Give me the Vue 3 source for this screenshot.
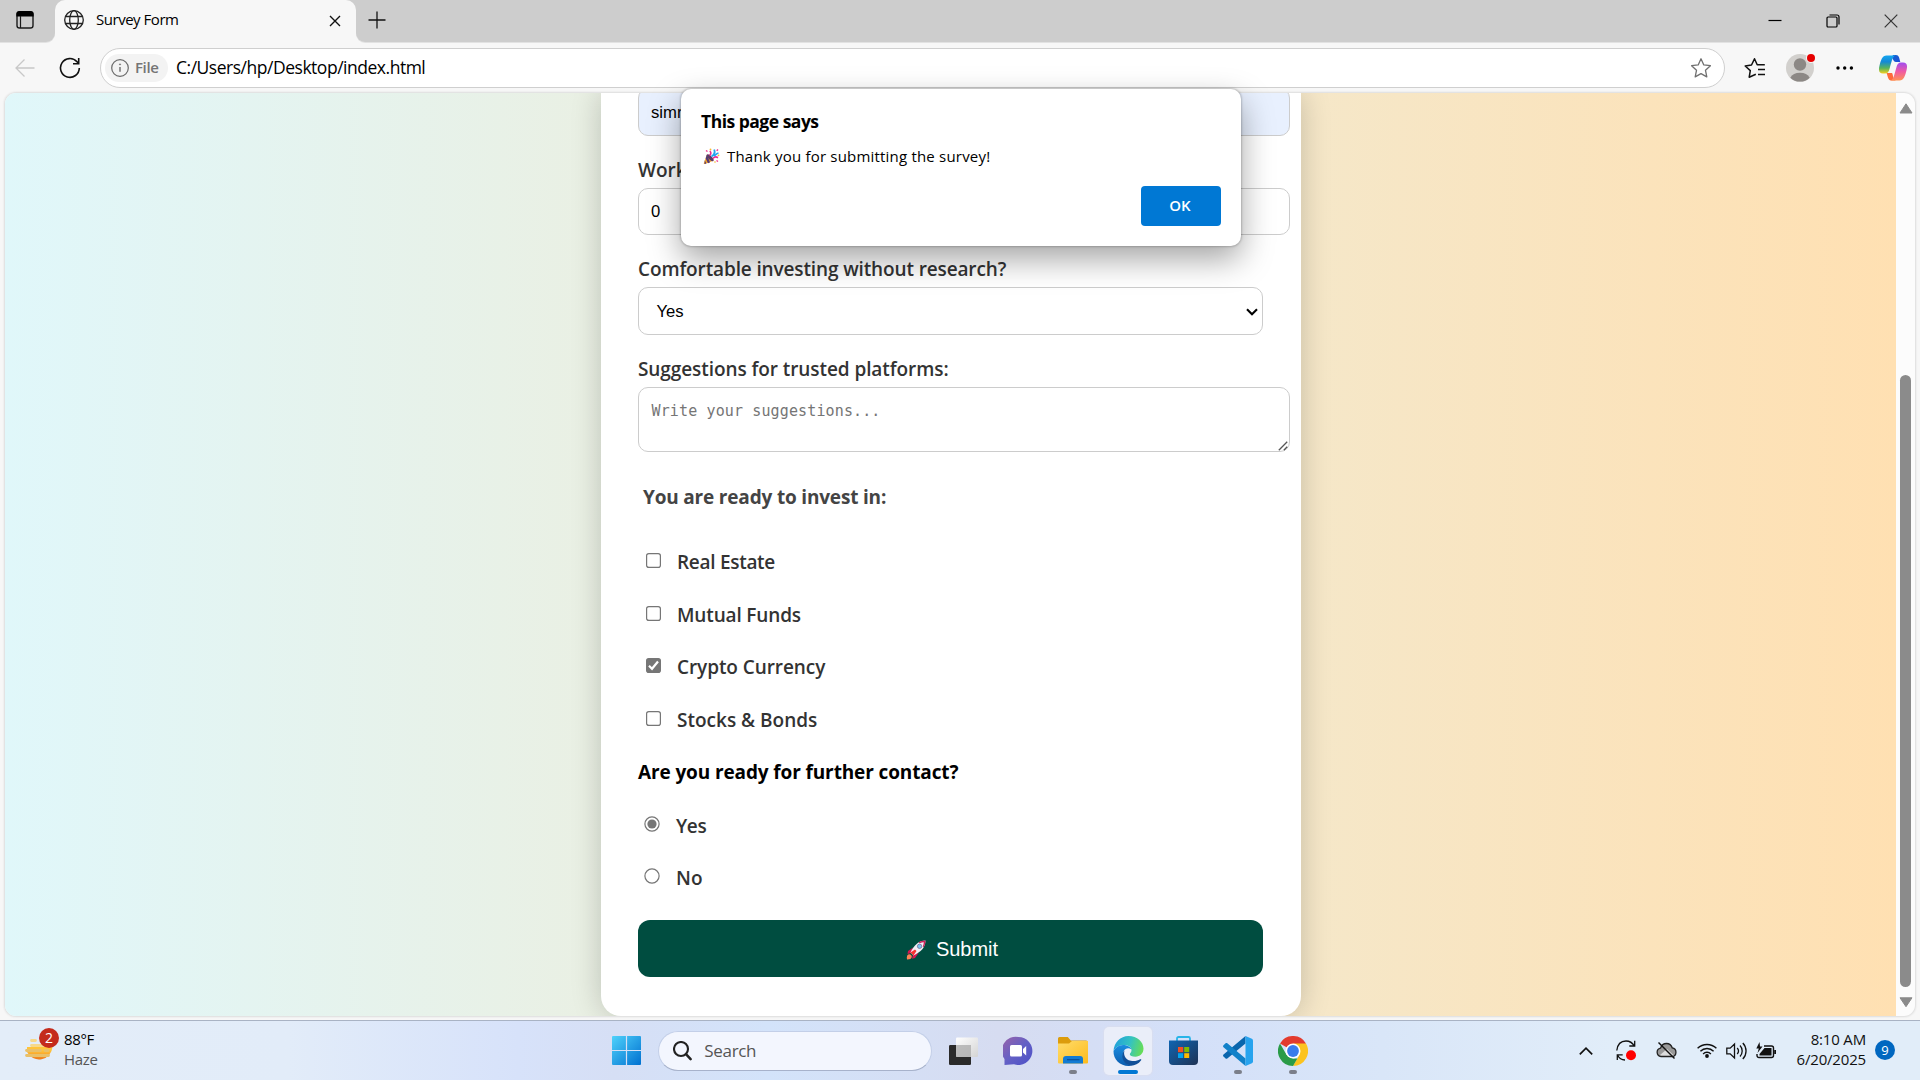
<script setup>
import { ref } from 'vue'

const investments = ref([
  { label: 'Real Estate', checked: false, spacing: -0.29 },
  { label: 'Mutual Funds', checked: false, spacing: -0.15 },
  { label: 'Crypto Currency', checked: true, spacing: -0.08 },
  { label: 'Stocks & Bonds', checked: false, spacing: 0 },
])
const contact = ref('Yes')
const contactOptions = ['Yes', 'No']
</script>

<template>
  <div class="screen">
    <header class="tabstrip">
      <div class="strip-left">
        <svg width="20" height="20" viewBox="0 0 20 20">
          <rect x="2" y="2" width="16" height="16" rx="2.6" fill="none" stroke="#1b1b1b" stroke-width="1.4" />
          <path d="M1.4 6.5V4a3 3 0 0 1 3-3h11.200a3 3 0 0 1 3 3v2.500z" fill="#000" />
          <path d="M5.500 6v12" stroke="#1b1b1b" stroke-width="1.2" />
        </svg>
      </div>
      <div class="tab-bg">
        <div class="tab">
          <svg class="globe" width="22" height="22" viewBox="0 0 22 22" fill="none" stroke="#222" stroke-width="1.300">
            <circle cx="11" cy="11" r="9.300" />
            <ellipse cx="11" cy="11" rx="4.300" ry="9.300" />
            <path d="M2.500 7.500h17M2.500 14.500h17" />
          </svg>
          <span class="tab-title">Survey Form</span>
          <svg class="tab-close" width="12" height="12" viewBox="0 0 12 12"><path d="M1 1l10 10M11 1L1 11" stroke="#111" stroke-width="1.400" /></svg>
        </div>
      </div>
      <div class="strip-right">
        <svg class="plus" width="18" height="18" viewBox="0 0 18 18"><path d="M9 .5v17M.5 9h17" stroke="#111" stroke-width="1.300" /></svg>
        <div class="win-controls">
          <svg width="14" height="14" viewBox="0 0 14 14"><path d="M.5 6.500h13" stroke="#000" stroke-width="1.200" /></svg>
          <svg width="14" height="14" viewBox="0 0 14 14" fill="none" stroke="#000" stroke-width="1.200">
            <rect x="1" y="3" width="10" height="10" rx="1" /><path d="M3.500 1H11a2 2 0 0 1 2 2v7.500" />
          </svg>
          <svg width="14" height="14" viewBox="0 0 14 14"><path d="M.7.7l12.600 12.600M13.300.7L.7 13.300" stroke="#333" stroke-width="1.200" /></svg>
        </div>
      </div>
    </header>

    <nav class="toolbar">
      <svg class="back" width="20" height="20" viewBox="0 0 20 20" fill="none" stroke="#c8c8c8" stroke-width="1.300"><path d="M19.500 10H1M9.500 1.500L1 10l8.500 8.500" /></svg>
      <svg class="reload" width="22" height="22" viewBox="0 0 22 22" fill="none" stroke="#111" stroke-width="1.600"><path d="M20.300 11A9.400 9.400 0 1 1 18 4.800L19.500 6.500M19.700 1v5.700H14" /></svg>
      <div class="address">
        <div class="file-chip">
          <svg width="18" height="18" viewBox="0 0 18 18" fill="none" stroke="#6a6a6a" stroke-width="1.200"><circle cx="9" cy="9" r="8.300" /><path d="M9 8v4.800" stroke-width="1.400" /><circle cx="9" cy="5.400" r=".6" fill="#6a6a6a" stroke-width=".6" /></svg>
          <span>File</span>
        </div>
        <span class="url">C:/Users/hp/Desktop/index.html</span>
        <svg width="22" height="22" viewBox="0 0 22 22" fill="none" stroke="#707070" stroke-width="1.300" stroke-linejoin="round"><path d="M11 1.800l2.800 6.100 6.600.8-4.900 4.600 1.300 6.600-5.800-3.300-5.800 3.300 1.300-6.600L1.600 8.700l6.600-.8z" /></svg>
      </div>
      <svg class="favs" width="22" height="22" viewBox="0 0 22 22" fill="none" stroke="#111" stroke-width="1.500" stroke-linejoin="round"><path d="M11.800 17.200L5.200 20.200l1.100-6.600L1.200 9l6.300-1L10.500 1.800 13.200 7.800h7.600M14 12.600h7M14 17.400h7" /></svg>
      <div class="avatar">
        <svg width="28" height="28" viewBox="0 0 28 28">
          <circle cx="14" cy="14" r="14" fill="#d2d0cd" /><circle cx="14" cy="10.500" r="6.200" fill="#8c8885" />
          <path d="M4.300 23.700a10.500 8 0 0 1 19.400 0A14 14 0 0 1 4.300 23.700z" fill="#8c8885" />
        </svg>
        <i class="dot"></i>
      </div>
      <svg class="more" width="18" height="4" viewBox="0 0 18 4"><circle cx="2" cy="2" r="1.700" /><circle cx="8.700" cy="2" r="1.700" /><circle cx="15.400" cy="2" r="1.700" /></svg>
      <svg class="copilot" width="28" height="26" viewBox="0 0 28 26">
        <defs>
          <linearGradient id="cpA" x1="0" y1="0" x2="0" y2="1"><stop offset="0" stop-color="#15a6f0" /><stop offset=".35" stop-color="#1489d6" /><stop offset=".7" stop-color="#59b45a" /><stop offset="1" stop-color="#f4cf20" /></linearGradient>
          <linearGradient id="cpB" x1=".3" y1="0" x2=".3" y2="1"><stop offset="0" stop-color="#a04df0" /><stop offset=".5" stop-color="#ef5aa4" /><stop offset="1" stop-color="#ff9354" /></linearGradient>
          <linearGradient id="cpC" x1="0" y1="0" x2="1" y2="1"><stop offset="0" stop-color="#1463cf" /><stop offset="1" stop-color="#1f4fd8" /></linearGradient>
        </defs>
        <path d="M14 0h3c3 0 3.300 3 4.300 7h-4.500c-2 0-2.800-3-4-5z" fill="url(#cpC)" />
        <path d="M7.500 18h5.500c1.500 2 .5 6.500 4 7.500h-5c-3 0-3-4-4.500-7.500z" fill="#ff6a3a" />
        <path d="M7.500.5h9c-3.200 1-3.800 6-6 13.500-.8 3-2 4.500-4.500 4.500H4c-4 0-4.500-3-3.700-7C1.800 5 3.300.5 7.500.5z" fill="url(#cpA)" />
        <path d="M20.500 25.500h-9c3.200-1 3.800-6 6-13.500.8-3 2-4.500 4.500-4.500h2c4 0 4.500 3 3.700 7-1.500 6.500-3 11-7.200 11z" fill="url(#cpB)" />
      </svg>
    </nav>

    <div class="page-frame">
      <main class="viewport">
        <form class="card" @submit.prevent>
          <input class="box first" value="simran" />
          <label class="label">Work</label>
          <input class="box" value="0" />
          <label class="label long">Comfortable investing without research?</label>
          <div class="box select">
            <span>Yes</span>
            <svg width="12" height="8" viewBox="0 0 12 8" fill="none" stroke="#000" stroke-width="2.100"><path d="M1 1.300l5 5 5-5" /></svg>
          </div>
          <label class="label suggest">Suggestions for trusted platforms:</label>
          <div class="box area">
            <span>Write your suggestions...</span>
            <svg class="grip" width="10" height="10" viewBox="0 0 10 10" stroke="#555" stroke-width="1.300"><path d="M.8 9.200L9.200.8M5.800 9.200L9.200 5.800" /></svg>
          </div>
          <h4 class="invest-title">You are ready to invest in:</h4>
          <div v-for="item in investments" :key="item.label" class="option" @click="item.checked = !item.checked">
            <svg class="check" width="15" height="15" viewBox="0 0 15 15">
              <rect x=".6" y=".6" width="13.800" height="13.800" rx="2.200" :fill="item.checked ? '#767676' : '#fff'" stroke="#767676" stroke-width="1.200" />
              <path v-if="item.checked" d="M3 7.800l3 3L12 3.500" fill="none" stroke="#fff" stroke-width="2.200" />
            </svg>
            <span :style="{ letterSpacing: item.spacing + 'px' }">{{ item.label }}</span>
          </div>
          <h4 class="contact-title">Are you ready for further contact?</h4>
          <div v-for="opt in contactOptions" :key="opt" class="option radio" @click="contact = opt">
            <svg class="check" width="16" height="16" viewBox="0 0 16 16">
              <circle cx="8" cy="8" r="7.100" fill="#fff" stroke="#767676" stroke-width="1.200" />
              <circle v-if="contact === opt" cx="8" cy="8" r="4.600" fill="#767676" />
            </svg>
            <span>{{ opt }}</span>
          </div>
          <button class="submit" type="submit">
            <svg width="20" height="20" viewBox="0 0 20 20">
              <path d="M1 19.500c-.6-3 .3-5 2-5.200 1.500-.2 3 1 2.800 2.700C5.500 18.800 3.500 19.600 1 19.500z" fill="#ff8354" />
              <path d="M7 7.500L2 11l-.5 3 4-1zM12.500 13L9 18l-3 .8 1-4.300z" fill="#d4154f" />
              <path d="M19.500.5C13 .5 8 5 4.500 12.500l3 3C15 12 19.500 7 19.500.5z" fill="#f3eef6" />
              <path d="M19.500.5c-2.600 0-4.800.7-6.800 1.900l4.900 4.900c1.200-2 1.900-4.200 1.900-6.800z" fill="#ca0b4a" opacity=".9" />
              <path d="M17.800 2.200c-3 .2-5 1.200-7 3L15 9.200c1.700-2 2.600-4.200 2.800-7z" fill="#f3eef6" />
              <path d="M4.500 12.500L9 9.500 10.500 11l-3 4.500z" fill="#f8312f" />
              <circle cx="13.600" cy="6.300" r="2.200" fill="#7ac3f2" stroke="#7b6f91" stroke-width=".8" />
            </svg>
            <span>Submit</span>
          </button>
        </form>
      </main>
      <aside class="scrollbar">
        <svg width="14" height="11" viewBox="0 0 14 11"><path d="M7 .8L13 10H1z" fill="#8b8b8b" stroke="#8b8b8b" stroke-linejoin="round" /></svg>
        <div class="thumb"></div>
        <svg width="14" height="11" viewBox="0 0 14 11"><path d="M7 9.700L13 .8H1z" fill="#8b8b8b" stroke="#8b8b8b" stroke-linejoin="round" /></svg>
      </aside>
    </div>

    <footer class="taskbar">
      <div class="weather">
        <div class="weather-icon">
          <svg width="30" height="26" viewBox="0 0 30 26" stroke-linecap="round">
            <defs><linearGradient id="sun" x1="0" y1="0" x2="0" y2="1"><stop offset="0.3" stop-color="#ffc43a" /><stop offset="1" stop-color="#ee7a17" /></linearGradient></defs>
            <path d="M3 10h25.500a13.500 13.500 0 0 1-25.500 5z" fill="url(#sun)" />
            <path d="M7.500 3.500h4M7.500 8.500h18" stroke="#f6d98b" stroke-width="2.800" />
            <path d="M2.500 13.500h14M21 13.500h3M2.500 18.500h22" stroke="#e9c069" stroke-width="2.800" />
          </svg>
          <b class="count">2</b>
        </div>
        <div class="weather-text"><span>88°F</span><span class="dim">Haze</span></div>
      </div>

      <div class="apps">
        <svg class="start" width="29" height="29" viewBox="0 0 29 29">
          <defs><linearGradient id="win" x1="0" y1="0" x2="1" y2="1"><stop offset="0" stop-color="#4fd2fb" /><stop offset="1" stop-color="#0070d0" /></linearGradient></defs>
          <path d="M1 0h12.900v13.900H0V1a1 1 0 0 1 1-1zM15.100 0H28a1 1 0 0 1 1 1v12.900H15.100zM0 15.100h13.900V29H1a1 1 0 0 1-1-1zM15.100 15.100H29V28a1 1 0 0 1-1 1H15.100z" fill="url(#win)" />
        </svg>
        <div class="search">
          <svg width="19" height="20" viewBox="0 0 19 20" fill="none" stroke="#222" stroke-width="2.100"><circle cx="8" cy="8" r="7" /><path d="M13 13.200l4.600 5" stroke-width="2.500" stroke-linecap="round" /></svg>
          <span>Search</span>
        </div>
        <div class="app">
          <svg width="30" height="30" viewBox="0 0 30 30">
            <defs><linearGradient id="tv" x1="0" y1="0" x2="1" y2="1"><stop offset="0" stop-color="#fff" /><stop offset="1" stop-color="#d4d4d4" /></linearGradient></defs>
            <rect x="1" y="9" width="22" height="20" rx="1.200" fill="#2a2a2a" /><rect x="8" y="1.500" width="22" height="19.500" rx="1.200" fill="url(#tv)" /><path d="M8 9h15v12H8z" fill="#aaa" opacity=".75" />
          </svg>
        </div>
        <div class="app">
          <svg width="30" height="30" viewBox="0 0 30 30">
            <defs><linearGradient id="chat" x1="0" y1="0" x2="1" y2="1"><stop offset="0" stop-color="#9a63a8" /><stop offset=".5" stop-color="#6460c5" /><stop offset="1" stop-color="#4c50c8" /></linearGradient></defs>
            <path d="M15.500 1a14 14 0 1 1-4.500 27.300L1.500 29V23A14 14 0 0 1 15.500 1z" fill="url(#chat)" />
            <rect x="7" y="9" width="12" height="11.500" rx="1.600" fill="#fff" /><path d="M20 13l3.200-3v9.500L20 16.500z" fill="#fff" />
          </svg>
        </div>
        <div class="app">
          <svg width="30" height="28" viewBox="0 0 30 28">
            <defs><linearGradient id="fold" x1="0" y1="0" x2="1" y2="1"><stop offset="0" stop-color="#ffdc6b" /><stop offset="1" stop-color="#fdbb1c" /></linearGradient></defs>
            <path d="M0 1.500A1.500 1.500 0 0 1 1.500 0h8.300l3 3.500H28a2 2 0 0 1 2 2V10H0z" fill="#dc9c0c" />
            <path d="M0 6.500h11l3-2.500h16v21.500a1 1 0 0 1-1 1H1a1 1 0 0 1-1-1z" fill="url(#fold)" />
            <path d="M5 26.500V22a3 3 0 0 1 3-3h14a3 3 0 0 1 3 3v4.500z" fill="#127bd3" /><path d="M9 22.700h12.500" stroke="#0a4f97" stroke-width="1.200" />
          </svg>
          <i class="run"></i>
        </div>
        <div class="app active">
          <svg width="31" height="30" viewBox="0 0 31 30">
            <defs>
              <linearGradient id="edA" x1="0" y1=".3" x2="1" y2=".5"><stop offset="0" stop-color="#1f9fdc" /><stop offset=".55" stop-color="#35c3c0" /><stop offset="1" stop-color="#66dd57" /></linearGradient>
              <linearGradient id="edB" x1="0" y1="0" x2="0" y2="1"><stop offset="0" stop-color="#1b8de0" /><stop offset="1" stop-color="#0b5cae" /></linearGradient>
            </defs>
            <path d="M.5 15C1 6.500 7.500 0 15.500 0c8.800 0 15 6 15 12.600 0 5-3.700 8.200-8 8.200-3.600 0-5.700-1.300-5.700-2.600 0-1 1.700-1.500 1.700-4 0-2.800-3-5.200-7.500-5.200C6 9 2.500 11.200.5 15z" fill="url(#edA)" />
            <path d="M.5 15C2.500 11 6 9 10 9c4 0 7.600 1.800 8.400 4.200-1-.6-2.200-1-3.200-1-4 0-5.700 4.500-5.200 8.300.6 4.800 4 8.300 8.500 9.200-1 .2-2 .3-3 .3C7.200 30 .2 23.500.5 15z" fill="url(#edB)" />
            <path d="M11.500 14.500c-1.300 3.700.3 9 6.300 10.300 3.700.8 7-.2 9.300-1.500.9-.5 1.500.3 1 1-2.600 3.700-6.400 5.300-10 5.500-5.500-.8-8.200-4.800-8.700-8.700-.3-2.500.5-5 2.100-6.600z" fill="#104f98" />
          </svg>
          <i class="run wide"></i>
        </div>
        <div class="app">
          <svg width="29" height="29" viewBox="0 0 29 29">
            <defs><linearGradient id="store" x1="0" y1="0" x2="1" y2="1"><stop offset="0" stop-color="#0f65b2" /><stop offset="1" stop-color="#1f3355" /></linearGradient></defs>
            <path d="M8 6V2.500A1.500 1.500 0 0 1 9.500 1h10A1.500 1.500 0 0 1 21 2.500V6" fill="none" stroke="#28b4e8" stroke-width="1.800" />
            <path d="M0 4.500h29V25a4 4 0 0 1-4 4H4a4 4 0 0 1-4-4z" fill="url(#store)" />
            <path d="M9 11h5.200v5.200H9z" fill="#f25022" /><path d="M15.200 11h5v5.200h-5z" fill="#7fba00" /><path d="M9 17.200h5.200V22H9z" fill="#00a4ef" /><path d="M15.200 17.200h5V22h-5z" fill="#ffb900" />
          </svg>
        </div>
        <div class="app">
          <svg width="30" height="30" viewBox="0 0 30 30">
            <path d="M22.500 7.500v0L4.300 22.500c-.6.400-1.200.4-1.700 0L.5 20.600c-.6-.5-.6-1.400 0-2L22.500 0z" fill="#0a66ad" />
            <path d="M22.500 22.500L4.300 7.200c-.6-.4-1.200-.4-1.700 0L.5 9.200c-.6.5-.6 1.400 0 2L22.500 30z" fill="#1181c9" />
            <path d="M22.500 0l6.400 2.700c.7.300 1.100.9 1.100 1.700v21.200c0 .8-.4 1.400-1.100 1.700L22.500 30z" fill="#27a3ee" />
          </svg>
          <i class="run"></i>
        </div>
        <div class="app">
          <svg width="30" height="30" viewBox="0 0 30 30">
            <path d="M15 15L2 7.500A15 15 0 0 1 28 7.500z" fill="#e33b2e" />
            <path d="M15 7.500h13A15 15 0 0 1 15 30l6.500-11.200z" fill="#fcc31e" />
            <path d="M2 7.500l6.500 11.200L15 22.500h4.400L15 30A15 15 0 0 1 2 7.500z" fill="#2a9b48" />
            <circle cx="15" cy="15" r="7.500" fill="#fff" /><circle cx="15" cy="15" r="5.900" fill="#3a7cec" />
          </svg>
          <i class="run"></i>
        </div>
      </div>

      <div class="tray">
        <svg width="14" height="8" viewBox="0 0 14 8" fill="none" stroke="#111" stroke-width="1.700"><path d="M.8 7.300L7 1.200l6.200 6.100" /></svg>
        <svg class="sync" width="21" height="21" viewBox="0 0 21 21" fill="none" stroke="#111" stroke-width="1.300"><path d="M.8 10.500C1.500 4.500 5 1 10 1c4 0 6.500 1.800 8.300 5M18.700.8V6h-5.400M1.300 20v-5.200h5.400M1.700 15.300C3 18 5.500 20 9 20" /><circle cx="15" cy="15.300" r="5" fill="#f00" stroke="none" /></svg>
        <svg class="cloud" width="21" height="17" viewBox="0 0 21 17"><path d="M5 14.500a4.200 4.200 0 0 1-.5-8.300C5.500 3 8 1.500 10.500 1.500c3 0 5 2 5.700 4.300a4.400 4.400 0 0 1 0 8.700z" fill="#999" stroke="#222" stroke-width="1.300" /><path d="M4 13l7-6 7 6.500H5z" fill="#ddd" /><path d="M2.500.5l16 16" stroke="#111" stroke-width="1.400" /></svg>
        <svg class="wifi" width="20" height="15" viewBox="0 0 20 15" fill="none" stroke="#111" stroke-width="1.400"><path d="M.6 5.300a13.500 13.500 0 0 1 18.800 0M3.400 8.200a9.400 9.400 0 0 1 13.200 0M6.100 10.900a5.600 5.600 0 0 1 7.800 0" /><circle cx="10" cy="13" r="1.900" fill="#111" stroke="none" /></svg>
        <svg class="vol" width="21" height="18" viewBox="0 0 21 18" fill="none" stroke="#111" stroke-width="1.300"><path d="M.8 6.200h3.400L8.500 2v14l-4.300-4.200H.8zM11.200 6a4.500 4.500 0 0 1 0 6M14 3.500a8 8 0 0 1 0 11M16.800 1a11.500 11.500 0 0 1 0 16" /></svg>
        <svg class="bat" width="21" height="17" viewBox="0 0 21 17"><path d="M8 4h7.500a2 2 0 0 1 2 2v7.500a2 2 0 0 1-2 2H3a2 2 0 0 1-2-2V12" fill="none" stroke="#111" stroke-width="1.400" /><path d="M8.500 6h7v7.500h-12V12z" fill="#111" /><path d="M18.200 8h1.800v4h-1.800z" fill="#111" /><path d="M3.500 0L.3 6.500h2.500L1.500 11l5-6.500H4z" fill="#111" /></svg>
        <div class="clock"><span>8:10 AM</span><span>6/20/2025</span></div>
        <b class="notif">9</b>
      </div>
    </footer>

    <div class="dialog" role="alertdialog">
      <h3>This page says</h3>
      <p>
        <svg width="17" height="17" viewBox="0 0 17 17">
          <path d="M4 6.500l6.300 6.300L1.800 16C1 16.300.6 15.900.9 15z" fill="#f5a52a" /><path d="M4 6.500l3 8-2 .700-2.400-5zM1.700 12.300l1.700 3.200-1.800.5z" fill="#533a78" />
          <ellipse cx="7.200" cy="9.700" rx="4.500" ry="1.800" transform="rotate(45 7.200 9.700)" fill="#5b3c65" />
          <path d="M6.500 7.500C8.500 6 8 4 6.800 3M10 10.500c1.500-2 3.500-1.700 5-.8" fill="none" stroke="#ed2a93" stroke-width="1.600" />
          <path d="M8.500 8.500C11 7 12.500 5 11.200 1.500M11 8c1.500-1 2.500-2.500 4.500-3" fill="none" stroke="#22a7ee" stroke-width="1.800" />
          <path d="M3 2.500l1.500 1M15 1.500l-1.300 1.300M13.500 12.500l1.500 1" stroke="#f0308c" stroke-width="1.400" /><circle cx="7.500" cy="1.500" r=".9" fill="#f9b62d" /><circle cx="15.500" cy="7.300" r=".9" fill="#f9b62d" /><circle cx="12" cy="14" r=".8" fill="#f9b62d" />
        </svg>
        <span>Thank you for submitting the survey!</span>
      </p>
      <button>OK</button>
    </div>
  </div>
</template>

<style>
body { overflow: hidden; }
</style>

<style scoped>
* { box-sizing: border-box; }
svg { display: block; flex: none; }
.screen { position: relative; display: flex; flex-direction: column; width: 1920px; height: 1080px; background: #f7f7f7; font-family: "Open Sans", "Noto Sans", sans-serif; color: #000; overflow: hidden; }

.tabstrip { display: flex; height: 42px; flex: none; }
.strip-left { width: 55px; background: #cdcdcd; border-bottom-right-radius: 9px; padding: 10px 0 0 15px; box-shadow: 0 1px #e2e2e2; }
.tab-bg { width: 301px; background: linear-gradient(#cdcdcd 20px, #f7f7f7 20px); }
.tab { display: flex; align-items: center; height: 42px; border-radius: 10px 10px 0 0; background: #f7f7f7; padding: 0 15px 2px 8px; }
.globe { margin-right: 11px; }
.tab-title { flex: 1; font-size: 15px; letter-spacing: -0.47px; line-height: 20px; padding-bottom: 2px; }
.tab-close { margin-top: 1px; }
.strip-right { flex: 1; display: flex; justify-content: space-between; background: #cdcdcd; border-bottom-left-radius: 9px; padding: 0 22px 0 12px; box-shadow: 0 1px #e2e2e2; }
.plus { margin-top: 11px; }
.win-controls { display: flex; gap: 44px; padding-top: 14px; }

.toolbar { display: flex; align-items: center; height: 51px; flex: none; padding: 0 12px 0 15px; }
.back { margin-right: 24px; }
.reload { margin-right: 19px; }
.address { flex: 1; display: flex; align-items: center; height: 40px; border: 1px solid #cfcfcf; border-radius: 20px; background: #fff; padding: 0 12px 0 4px; }
.file-chip { display: flex; align-items: center; width: 63px; height: 28px; border-radius: 14px; background: #f3f3f3; padding-left: 6px; gap: 6px; font-size: 15px; font-weight: 600; letter-spacing: -0.38px; color: #757575; }
.file-chip span { padding-bottom: 1px; }
.url { flex: 1; margin-left: 8px; padding-bottom: 2px; font-size: 17.5px; letter-spacing: -0.48px; }
.favs { margin-left: 19px; }
.avatar { position: relative; margin-left: 20px; }
.dot { position: absolute; right: -1px; top: 0; width: 8px; height: 8px; border-radius: 50%; background: #e60000; box-shadow: 0 0 0 1px #f7f7f7; }
.more { margin: 0 25px 0 22px; }
.copilot { margin-right: 1px; }

.page-frame { display: flex; height: 923px; flex: none; margin: 0 5px; border-radius: 11px; overflow: hidden; background: #fcfcfc; box-shadow: 0 0 2px 1px #dcdcdc; }
.viewport { width: 1891px; height: 923px; background: linear-gradient(to right, #e0f7fa, #ffe0b2); overflow: hidden; }
.card { display: flex; flex-direction: column; width: 700px; height: 923px; margin-left: 596px; padding: 0 11px 0 37px; background: #fff; border-radius: 0 0 20px 20px; box-shadow: 0 0 31px rgba(0, 0, 0, 0.2); }
.box { width: 652px; height: 47px; flex: none; border: 1px solid #ccc; border-radius: 10px; background: #fff; padding: 0 12px; font: 16.67px "Liberation Sans", Arial, sans-serif; color: #000; outline: none; }
.first { margin-top: -5px; height: 48px; padding-top: 2px; background: #e8f0fe; }
.label { height: 25px; line-height: 25px; margin: 22px 0 5px; font-size: 19px; font-weight: 600; color: #333; flex: none; }
.long { letter-spacing: -0.13px; }
.select { display: flex; align-items: center; justify-content: space-between; width: 625px; height: 48px; padding: 1px 4px 0 17.500px; }
.suggest { letter-spacing: -0.08px; }
.area { position: relative; height: 65px; padding: 13px 12.500px; font: 15px/20px "DejaVu Sans Mono", monospace; letter-spacing: 0.13px; color: #757575; }
.grip { position: absolute; right: 1px; bottom: 0; }
h4 { height: 25px; line-height: 25px; margin: 0; font-size: 19px; font-weight: 700; flex: none; }
.invest-title { margin: 33px 0 26px 5px; color: #444; letter-spacing: -0.18px; }
.option { display: flex; align-items: center; height: 52.6px; flex: none; padding-left: 8px; gap: 16px; font-size: 19px; font-weight: 600; color: #333; }
.check { position: relative; top: -1.6px; }
.contact-title { margin: 14px 0 14px; letter-spacing: -0.12px; }
.radio { padding-left: 6px; gap: 16px; }
.radio span { letter-spacing: -0.4px; }
.radio:last-of-type span { letter-spacing: 0; }
.radio .check { top: -2px; }
.submit { display: flex; align-items: center; justify-content: center; gap: 10px; width: 625px; height: 57px; flex: none; margin-top: 15.5px; padding: 2px 0 0 3px; border: 0; border-radius: 12px; background: #004d40; color: #fff; font: 20px "Liberation Sans", Arial, sans-serif; }

.scrollbar { display: flex; flex-direction: column; align-items: center; width: 19px; padding: 9.5px 0 8px; }
.thumb { width: 11px; height: 612px; margin: 261.5px 0 10px; border-radius: 6px; background: #8b8b8b; }

.taskbar { position: relative; display: flex; justify-content: space-between; height: 60px; flex: none; margin-top: 4px; border-top: 1px solid #a9b3c4; background: linear-gradient(to right, #e3edf9 0, #e2ecf9 15%, #d7e2fa 27%, #d6dff5 32%, #d3e3fa 40%, #d6dcf1 52%, #d4e0f9 62%, #d9e6f8 72%, #e1edf9 84%, #e1edf9); }
.weather { display: flex; width: 612px; padding-left: 24px; }
.weather-icon { position: relative; width: 30px; padding-top: 16px; }
.count { position: absolute; left: 15px; top: 7px; width: 20px; height: 20px; border-radius: 50%; background: #c42b1c; color: #fff; font-size: 14px; font-weight: 400; line-height: 20px; text-align: center; }
.weather-text { display: flex; flex-direction: column; padding: 8px 0 0 10px; font-size: 15px; line-height: 20px; letter-spacing: -0.33px; }
.dim { color: #555; }
.apps { display: flex; align-items: center; }
.start { margin-right: 17px; }
.search { display: flex; align-items: center; width: 274px; height: 40px; margin-right: 3.5px; padding-left: 14px; gap: 12px; border-radius: 20px; background: #f3f6fe; border: 1px solid #c3cfe8; border-bottom-color: #a7b2cb; font-size: 17px; letter-spacing: -0.31px; color: #555; }
.app { position: relative; display: flex; align-items: center; justify-content: center; width: 48px; height: 48px; margin: 0 3.5px; border-radius: 5px; }
.active { background: #eaeef9; box-shadow: 0 0 1px 1px #d9def0; }
.run { position: absolute; left: 20px; bottom: 1px; width: 8px; height: 4px; border-radius: 2px; background: #7b7f8a; }
.run.wide { left: 14px; width: 20px; background: #0078d4; }
.tray { display: flex; align-items: center; justify-content: flex-end; width: 599px; padding-right: 25px; }
.sync { margin-left: 23px; }
.cloud { margin-left: 19px; }
.wifi { margin-left: 20px; }
.vol { margin-left: 9px; }
.bat { margin-left: 9px; }
.clock { display: flex; flex-direction: column; align-items: flex-end; width: 89px; padding-bottom: 3px; font-size: 15px; line-height: 20px; letter-spacing: -0.17px; color: #111; }
.notif { width: 20px; height: 20px; margin: 0 0 1px 9px; border-radius: 50%; background: #0067c0; color: #fff; font-size: 13px; font-weight: 400; line-height: 20px; text-align: center; }

.dialog { position: absolute; left: 681px; top: 89px; width: 560px; height: 157px; padding: 20px; display: flex; flex-direction: column; border-radius: 10px; background: #fff; box-shadow: 0 0 2px 1px rgba(0, 0, 0, 0.18), 0 13px 32px rgba(0, 0, 0, 0.36); }
.dialog h3 { margin: 0; font-size: 17.5px; line-height: 24px; font-weight: 700; letter-spacing: -0.5px; }
.dialog p { display: flex; align-items: center; gap: 7px; margin: 13px 0 0 2px; height: 20px; font-size: 15px; letter-spacing: 0.2px; white-space: nowrap; }
.dialog button { width: 80px; height: 40px; margin: 20px 0 0 auto; padding: 0 2px 2px 0; border: 0; border-radius: 4px; background: #0078d4; color: #fff; font: 600 15px "Open Sans", sans-serif; }
</style>
